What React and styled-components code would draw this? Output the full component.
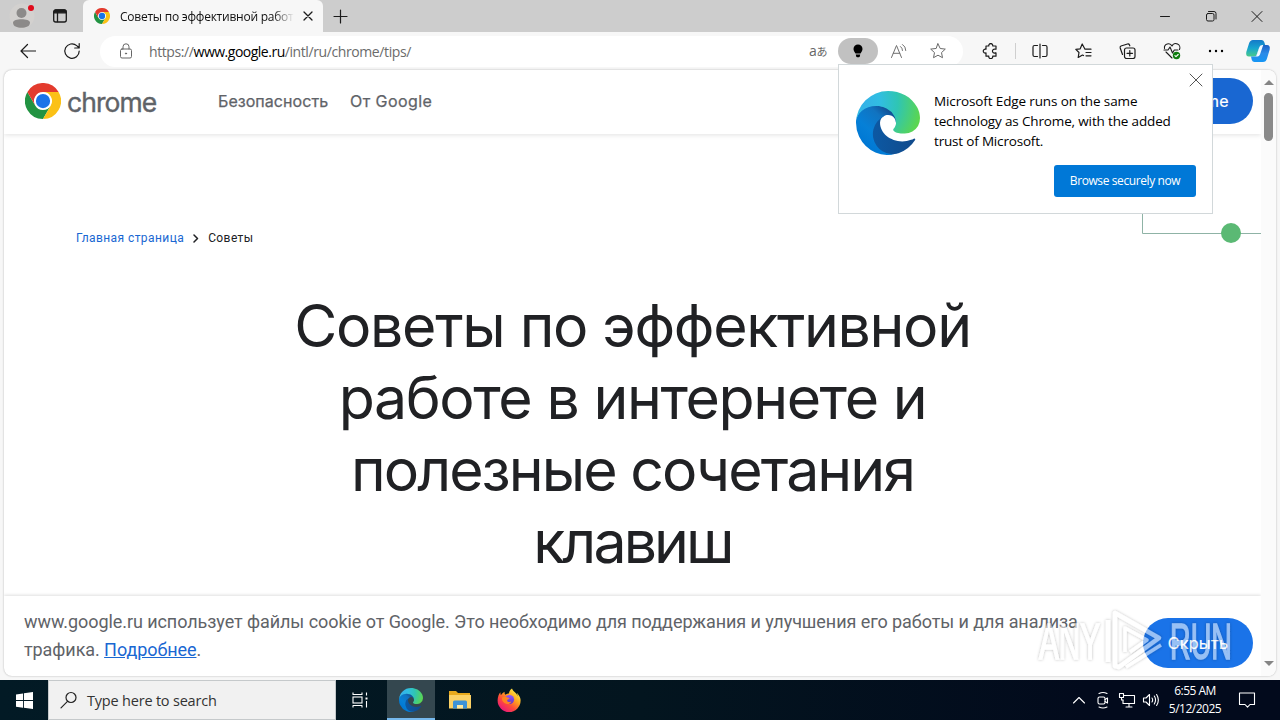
import styled, { createGlobalStyle } from 'styled-components';

const GlobalStyle = createGlobalStyle`
  * {
    box-sizing: border-box;
  }
  body {
    margin: 0;
    overflow: hidden;
    font-family: "Open Sans", "Noto Sans", sans-serif;
  }
  svg {
    display: block;
    flex: none;
  }
`;

/* ---------- icons ---------- */

const ChromeLogo = ({ size }) => (
  <svg width={size} height={size} viewBox="0 0 48 48">
    <circle cx="24" cy="24" r="13" fill="#fff" />
    <path d="M3.2 12A24 24 0 0 0 24 48L34.4 30A12 12 0 0 1 13.6 30Z" fill="#229342" />
    <path d="M24 12H44.8A24 24 0 0 1 24 48L34.4 30A12 12 0 0 0 24 12Z" fill="#fbc116" />
    <path d="M24 12H44.8A24 24 0 0 0 3.2 12L13.6 30A12 12 0 0 1 24 12Z" fill="#e33b2e" />
    <circle cx="24" cy="24" r="9.5" fill="#1a73e8" />
  </svg>
);

const EdgeLogo = ({ size, id }) => (
  <svg width={size} height={size} viewBox="0 0 256 256">
    <defs>
      <linearGradient id={`${id}a`} x1="63" y1="178" x2="241" y2="178" gradientUnits="userSpaceOnUse">
        <stop offset="0" stopColor="#0c59a4" />
        <stop offset="1" stopColor="#114a8b" />
      </linearGradient>
      <linearGradient id={`${id}b`} x1="157" y1="100" x2="46" y2="221" gradientUnits="userSpaceOnUse">
        <stop offset="0" stopColor="#114f95" />
        <stop offset=".25" stopColor="#1173c0" />
        <stop offset=".67" stopColor="#0680d7" />
        <stop offset="1" stopColor="#0078d4" />
      </linearGradient>
      <radialGradient id={`${id}c`} cx="26" cy="46" r="235" gradientUnits="userSpaceOnUse">
        <stop offset="0" stopColor="#35b1e8" />
        <stop offset=".3" stopColor="#31bee2" />
        <stop offset=".6" stopColor="#2fc5b4" />
        <stop offset="1" stopColor="#5bd64f" />
      </radialGradient>
    </defs>
    <path fill={`url(#${id}a)`} d="M231 190.5c-3.4 1.8-6.9 3.4-10.5 4.7a101.9 101.9 0 01-35.9 6.4c-47.3 0-88.5-32.5-88.5-74.3a31.5 31.5 0 0116.4-27.3c-42.8 1.8-53.8 46.4-53.8 72.5 0 74 68.1 81.4 82.8 81.4 7.9 0 19.8-2.3 27-4.6l1.3-.4a128.3 128.3 0 0066.6-52.8 4 4 0 00-5.4-5.6z" />
    <path fill={`url(#${id}b)`} d="M105.7 241.4A79.2 79.2 0 0183 220.1a80.7 80.7 0 0129.5-120c3.2-1.5 8.5-4.1 15.6-4a32.4 32.4 0 0125.7 13 31.9 31.9 0 016.3 18.7c0-.2 24.5-79.6-80-79.6-43.9 0-80 41.6-80 78.2a130.2 130.2 0 0012.1 56 128 128 0 00156.4 67 75.5 75.5 0 01-62.8-8z" />
    <path fill={`url(#${id}c)`} d="M152.3 148.9c-.9 1-3.4 2.5-3.4 5.6 0 2.6 1.7 5.2 4.8 7.3 14.3 10 41.4 8.6 41.5 8.6a59.6 59.6 0 0030.3-8.3 61.4 61.4 0 0030.4-52.9c.3-22.4-8-37.3-11.3-43.9C223.5 23.9 177.7 0 128 0A128 128 0 000 126.2c.5-36.5 36.8-66 80-66 3.5 0 23.5.3 42 10a72.6 72.6 0 0130.9 29.3c6.1 10.6 7.2 24.1 7.2 29.5 0 5.4-2.7 13.3-7.8 19.9z" />
  </svg>
);

const Line = ({ w = 16, h = 16, color = '#1b1b1b', sw = 1, children }) => (
  <svg width={w} height={h} viewBox={`0 0 ${w} ${h}`} fill="none" stroke={color} strokeWidth={sw} strokeLinecap="round" strokeLinejoin="round">
    {children}
  </svg>
);

const ProfileIcon = () => (
  <svg width="26" height="26" viewBox="0 0 26 26">
    <circle cx="13" cy="13" r="12.5" fill="#d3d1cf" />
    <circle cx="12.500" cy="10" r="5" fill="#8c8a89" />
    <path d="M4 19.500c0-4.500 17-4.500 17 0 0 4-4 5.200-8.500 5.200S4 23.500 4 19.500z" fill="#8c8a89" />
    <circle cx="22" cy="5" r="3" fill="#e00b1c" />
  </svg>
);

const WorkspaceIcon = () => (
  <Line sw={1.3}>
    <rect x="1.700" y="2" width="12.600" height="12" rx="2" />
    <path d="M2 4.500V4q0-2 2-2h8q2 0 2 2v.8H2z" fill="#1b1b1b" />
    <path d="M5.500 5v8.500" />
  </Line>
);

const BackIcon = () => (
  <Line sw={1.2}><path d="M15.500 8H1M7.500 1.500L1 8l6.500 6.500" /></Line>
);

const ReloadIcon = () => (
  <Line w={18} h={18} sw={1.2}><path d="M16.200 9a7.200 7.200 0 1 1-2.500-5.400L16 5.800M16.200 1.500V6h-4.500" /></Line>
);

const LockIcon = () => (
  <Line color="#666">
    <rect x="2.500" y="6" width="11" height="9" rx="1.500" />
    <path d="M5 6V3.800a3 3 0 0 1 6 0V6" />
    <circle cx="8" cy="10.500" r=".6" fill="#666" />
  </Line>
);

const BulbIcon = () => (
  <svg width="12" height="14" viewBox="0 0 12 14">
    <path d="M6 .5a4.500 4.500 0 0 1 4.500 4.600c0 2-1.300 3-2 4.400h-5c-.7-1.400-2-2.400-2-4.400A4.500 4.500 0 0 1 6 .5zM3.800 10.500h4.400l-.4 2q-.2.700-1 .7H5.200q-.8 0-1-.7z" fill="#000" />
  </svg>
);

const ReadAloudIcon = () => (
  <Line w={18} h={16} color="#707070">
    <path d="M1.500 14.500L6.500 2.500l5 12M3.300 10.300h6.500M10.500 3.500q2 1.300 2 4M12.500 1.500q3.300 2 3.300 6" />
  </Line>
);

const star = 'M8 .8l2.200 4.700 5.100.6-3.800 3.500 1 5.100L8 12.200l-4.500 2.500 1-5.100L.7 6.100l5.100-.6z';
const StarIcon = () => <Line color="#6a6a6a"><path d={star} /></Line>;

// knobs on the top, left and bottom, a notch on the right
const PuzzleIcon = () => (
  <Line w={17} sw={1.2}>
    <path d="M4 3H6.800a2 2 0 1 1 3.900 0h3.300v3.200h-.8a2 2 0 1 0 0 3.700h.8v3.300h-3.300a2 2 0 1 1-3.900 0H4v-3.300a2 2 0 1 1 0-3.700z" />
  </Line>
);

const SplitIcon = () => (
  <Line sw={1.2}>
    <path d="M5.500 2.500H2.500q-1.500 0-1.500 1.500v8q0 1.500 1.500 1.500h3M10.500 2.500h3q1.500 0 1.500 1.500v8q0 1.500-1.500 1.500h-3M8 1v14" />
  </Line>
);

const FavoritesIcon = () => (
  <Line w={17} sw={1.200}>
    <path d="M10 6.200h6M11 9.500h5M11 12.800h5M10 6.200L7.200 1 5.200 5.800.8 6.300l3.200 3.200L3.200 14.500l4.300-2.500 1 .5" />
  </Line>
);

const CollectionsIcon = () => (
  <Line w={17} sw={1.200}>
    <rect x="5.500" y="5" width="10.500" height="10.500" rx="2" />
    <path d="M10.800 7.500v5.500M8 10.300h5.500M3.500 11.500L1.200 5Q.8 3.500 2 3l6.500-2q1.500-.3 2 1l.3.800" />
  </Line>
);

const HealthIcon = () => (
  <Line w={18} h={18} sw={1.100}>
    <path d="M1.500 6.500a4 4 0 0 1 7.500-2.500 4 4 0 0 1 7.500 3.500M3 10l6 6M1 8h4l2-3 2.500 6 1.800-3H15" />
    <circle cx="13.500" cy="13.500" r="3.700" fill="#107c10" stroke="none" />
    <path d="M11.900 13.600l1.100 1.100 2.200-2.200" stroke="#fff" />
  </Line>
);

const MoreIcon = () => (
  <svg width="16" height="4" viewBox="0 0 16 4">
    <circle cx="2" cy="2" r="1.200" /><circle cx="8" cy="2" r="1.200" /><circle cx="14" cy="2" r="1.200" />
  </svg>
);

const CopilotIcon = () => (
  <svg width="26" height="24" viewBox="0 0 26 24">
    <defs>
      <linearGradient id="cpA" x1="0" y1="0" x2="0" y2="1">
        <stop offset="0" stopColor="#1479c9" /><stop offset=".5" stopColor="#16a5cf" /><stop offset="1" stopColor="#49c98a" />
      </linearGradient>
      <linearGradient id="cpB" x1="0" y1="0" x2="0" y2="1">
        <stop offset="0" stopColor="#1c5fc4" /><stop offset=".5" stopColor="#2b8be8" /><stop offset="1" stopColor="#1596f5" />
      </linearGradient>
    </defs>
    <path d="M8 1h8.500q2 0 2.700 2l1 3h-3q-2.200 0-3 2.500L12 15q-.8 2.500-3 2.500H4Q.5 17.500 1.300 13L4 4.500Q5 1 8 1z" fill="url(#cpA)" />
    <path d="M18 23H9.500q-2 0-2.700-2l-.8-3.500h3q2.200 0 3-2.500L14.200 8.500Q15 6 17.200 6H22q3.500 0 2.700 4.500L22 19.500Q21 23 18 23z" fill="url(#cpB)" />
    <path d="M11.500 16.500l2.700-8q.8-2.500 3-2.500h1L15 15.500q-.8 2-2.500 2H9q1.700 0 2.500-1z" fill="#f2faff" />
  </svg>
);

const WindowsIcon = () => (
  <svg width="17" height="17" viewBox="0 0 17 17" fill="#fff">
    <path d="M0 2.400l7-1v6.700H0zM7.900 1.300L17 0v8.100H7.900zM0 9h7v6.700l-7-1zM7.900 9H17v8l-9.100-1.300z" />
  </svg>
);

const SearchIcon = () => (
  <Line w={18} h={18} color="#222" sw={1.200}><circle cx="11" cy="6.500" r="5" /><path d="M7.500 10.300L1 16.800" /></Line>
);

const TaskViewIcon = () => (
  <Line w={18} h={18} color="#fff" sw={1.100}>
    <path d="M2 1.500v2h9v-2M2 16.500v-2h9v2M15.500 1.500v3M15.500 10v6.500" strokeLinecap="butt" />
    <rect x="2" y="6" width="9" height="6" strokeLinejoin="miter" />
    <path d="M14.500 7.500h2" strokeWidth="2" strokeLinecap="butt" />
  </Line>
);

const FolderIcon = () => (
  <svg width="24" height="20" viewBox="0 0 24 20">
    <path d="M1 1h7l2 2h12v15H1z" fill="#e8a91c" />
    <path d="M1 5h22v13.500H1z" fill="#fbd165" />
    <path d="M5 18.500V12q0-1.500 1.500-1.500h11q1.500 0 1.500 1.500v6.500h-4V15H9v3.500z" fill="#3e93d8" />
    <path d="M9 15h6v3.500H9z" fill="#ffe9a0" />
  </svg>
);

const FirefoxIcon = () => (
  <svg width="24" height="24" viewBox="0 0 24 24">
    <defs>
      <linearGradient id="ffA" x1="20" y1="2" x2="4" y2="22" gradientUnits="userSpaceOnUse">
        <stop offset="0" stopColor="#fff04a" /><stop offset=".35" stopColor="#ffa51e" />
        <stop offset=".65" stopColor="#ff4b3a" /><stop offset="1" stopColor="#e8157d" />
      </linearGradient>
      <linearGradient id="ffB" x1="0" y1="0" x2="0" y2="1">
        <stop offset="0" stopColor="#9059ff" /><stop offset="1" stopColor="#6133c4" />
      </linearGradient>
    </defs>
    <path d="M22.500 8.500c-.6-1.500-1.800-3-2.800-3.500.8 1.500 1 2.500 1.100 3.200C19 4 16 3.500 15 .5 12.500 2 12 4.500 12 5.500c-1.500 0-2.700.6-3.700 1.300C7.500 6 7.500 4.500 7.600 3.800 6 4.500 4.800 6 4 7c-.5-.6-.6-2.400-.5-2.800C2 5.500.6 9 .6 12.500a11.500 11.500 0 0 0 23 0c0-1.500-.3-2.800-1.100-4z" fill="url(#ffA)" />
    <circle cx="12.500" cy="11.500" r="4.600" fill="url(#ffB)" />
    <path d="M5 9.500c2-1.200 4.500-.8 5.500 0l2 .4c0 1.300-2.300 1.300-2.500 2.300.2 1.800 2.500 2.400 4.500 1.400-1 2.500-4.500 3.300-7 1.500S5 12 5 9.500z" fill="#ff8420" />
  </svg>
);

const TraySvg = ({ children }) => <Line w={18} h={18} color="#fff" sw={1.100}>{children}</Line>;

/* ---------- layout ---------- */

const Screen = styled.div`
  position: relative;
  display: flex;
  flex-direction: column;
  width: 1280px;
  height: 720px;
  background: #f7f7f7;
`;

const TabStrip = styled.div`
  display: flex;
  align-items: center;
  height: 32px;
  background: #cdcdcd;
`;

const TabTools = styled.div`
  display: flex;
  align-items: center;
  gap: 17px;
  width: 83px;
  padding-left: 9px;
`;

const Tab = styled.div`
  display: flex;
  align-items: center;
  width: 240px;
  height: 32px;
  padding: 0 10px 0 11px;
  background: #f7f7f7;
  border-radius: 6px 6px 0 0;
`;

const TabTitle = styled.div`
  flex: 1;
  margin: 0 9px 0 10px;
  overflow: hidden;
  white-space: nowrap;
  font-size: 12px;
  letter-spacing: -0.24px;
  color: #111;
  mask-image: linear-gradient(90deg, #000 88%, transparent);
`;

const NewTab = styled.div`
  flex: 1;
  padding-left: 10px;
`;

const WindowButtons = styled.div`
  display: flex;
  align-items: center;
  gap: 30px;
  padding-right: 15px;
`;

const Toolbar = styled.div`
  display: flex;
  align-items: center;
  height: 38px;
  padding: 0 9px 0 20px;
`;

const NavButtons = styled.div`
  display: flex;
  align-items: center;
  gap: 27px;
  width: 80px;
`;

const AddressBar = styled.div`
  display: flex;
  align-items: center;
  width: 863px;
  height: 31px;
  padding: 0 17px 0 18px;
  flex: none;
  background: #fff;
  border-radius: 16px;
`;

const Url = styled.div`
  flex: 1;
  margin-left: 15px;
  font-size: 14px;
  letter-spacing: -0.4px;
  color: #6b6b6b;

  b {
    font-weight: 400;
    letter-spacing: -0.5px;
    color: #000;
  }
`;

const Translate = styled.div`
  width: 20px;
  font-family: "Open Sans", "Noto Sans CJK JP", sans-serif;
  font-size: 14px;
  line-height: 16px;
  white-space: nowrap;
  letter-spacing: -0.2px;
  color: #666;

  small {
    font-size: 11px;
  }
`;

const BulbButton = styled.div`
  display: grid;
  place-items: center;
  width: 40px;
  height: 26px;
  margin: 0 12px 0 9px;
  background: #c1c1c1;
  border-radius: 13px;
`;

const StarWrap = styled.div`
  margin-left: 22px;
`;

const ToolIcons = styled.div`
  display: flex;
  flex: 1;
  align-items: center;
  gap: 27px;
  padding-left: 19px;
`;

const Divider = styled.div`
  width: 1px;
  height: 16px;
  margin: 0 -11px;
  flex: none;
  background: #cfcfcf;
`;

const CopilotWrap = styled.div`
  margin-left: -6px;
`;

const PageFrame = styled.div`
  display: flex;
  width: 1272px;
  height: 606px;
  margin: 0 4px 4px;
  overflow: hidden;
  background: #fff;
  border-radius: 8px;
  box-shadow: 0 0 2px rgba(0, 0, 0, 0.3);
`;

const Page = styled.div`
  display: flex;
  flex: 1;
  flex-direction: column;
  min-width: 0;
`;

const SiteHeader = styled.header`
  display: flex;
  align-items: center;
  height: 64px;
  padding: 0 8px 2px 21px;
  box-shadow: 0 1px 5px rgba(0, 0, 0, 0.12);
`;

const Wordmark = styled.div`
  width: 151px;
  margin: 1px 0 0 6px;
  font-family: Inter, sans-serif;
  font-size: 26.500px;
  line-height: 32px;
  letter-spacing: -0.95px;
  color: #5f6368;
  -webkit-text-stroke: 0.4px #5f6368;
`;

const SiteLink = styled.div`
  width: ${(p) => p.$width};
  font-family: Inter, sans-serif;
  font-size: 16px;
  letter-spacing: ${(p) => p.$spacing};
  white-space: nowrap;
  color: #5f6368;
  -webkit-text-stroke: 0.25px #5f6368;
`;

const Pill = styled.div`
  display: flex;
  align-items: center;
  justify-content: ${(p) => p.$align || 'center'};
  width: ${(p) => p.$width};
  height: ${(p) => p.$height};
  margin: ${(p) => p.$drop || 0} 0 0 auto;
  padding: 0 24px;
  flex: none;
  background: ${(p) => p.$bg};
  border-radius: 25px;
  font-family: Inter, sans-serif;
  font-size: 16px;
  letter-spacing: 0.3px;
  white-space: nowrap;
  color: #fff;
  -webkit-text-stroke: 0.2px #fff;
`;

const Article = styled.main`
  flex: 1;
`;

const Breadcrumb = styled.div`
  display: flex;
  align-items: center;
  gap: 9px;
  height: 20px;
  margin: 94px 0 0 72px;
  font-family: Roboto, sans-serif;
  font-size: 12px;
  letter-spacing: 0.42px;
  color: #202124;

  a {
    color: #1967d2;
  }
`;

const Title = styled.h1`
  width: 1257px;
  margin: 42px 0 0;
  font-family: Inter, sans-serif;
  font-size: 59px;
  font-weight: 400;
  line-height: 72px;
  text-align: center;
  color: #202124;
`;

const TitleLine = styled.span`
  display: block;
  white-space: nowrap;
  letter-spacing: ${(p) => p.$spacing};
`;

const CookieBar = styled.div`
  display: flex;
  align-items: center;
  height: 80px;
  padding: 0 8px 0 20px;
  box-shadow: 0 -1px 3px rgba(0, 0, 0, 0.13);
`;

const CookieText = styled.div`
  font-family: Roboto, sans-serif;
  font-size: 18px;
  line-height: 28px;
  letter-spacing: -0.07px;
  white-space: nowrap;
  color: #5f6368;

  a {
    color: #1967d2;
    text-decoration: underline;
  }
`;

const Scrollbar = styled.div`
  display: flex;
  flex-direction: column;
  align-items: center;
  width: 15px;
  padding: 10px 0 10px;
  background: #fbfbfb;
`;

const Thumb = styled.div`
  width: 9px;
  height: 48px;
  margin: 8px 0 auto;
  background: #8a8a8a;
  border-radius: 5px;
`;

const Popup = styled.div`
  position: absolute;
  left: 838px;
  top: 64px;
  display: flex;
  width: 375px;
  height: 150px;
  padding: 26px 16px 16px 17px;
  background: #fff;
  border: 1px solid #d2d8da;
`;

const PopupBody = styled.div`
  display: flex;
  flex: 1;
  flex-direction: column;
  margin-left: 14px;
  font-size: 13.500px;
  line-height: 20px;
  color: #000;
`;

const PopupLine = styled.span`
  display: block;
  white-space: nowrap;
  letter-spacing: ${(p) => p.$spacing};
`;

const PopupButton = styled.div`
  display: grid;
  place-items: center;
  align-self: flex-end;
  width: 142px;
  height: 32px;
  margin-top: 14px;
  background: #0078d7;
  border-radius: 3px;
  font-size: 12px;
  letter-spacing: -0.4px;
  color: #fff;
`;

const PopupClose = styled.div`
  position: absolute;
  right: 9px;
  top: 8px;
`;

const Overlay = styled.div`
  position: absolute;
  left: ${(p) => p.$x}px;
  top: ${(p) => p.$y}px;
`;

const Taskbar = styled.div`
  display: flex;
  align-items: center;
  height: 40px;
  background: linear-gradient(90deg, #021a25, #03151f 50%, #020a1c 85%);
`;

const TaskButton = styled.div`
  display: grid;
  place-items: center;
  width: ${(p) => p.$width || '49px'};
  height: 40px;
  padding-right: ${(p) => p.$nudge || 0};
  background: ${(p) => (p.$active ? '#34474f' : 'transparent')};
  box-shadow: ${(p) => (p.$active ? 'inset 0 -2px #76b9ed' : 'none')};
`;

const SearchBox = styled.div`
  display: flex;
  align-items: center;
  gap: 9px;
  width: 288px;
  height: 40px;
  padding-left: 11px;
  background: #f1f1f1;
  border: 1px solid #c5c9cb;
  font-size: 14.500px;
  letter-spacing: -0.2px;
  color: #333;
`;

const Tray = styled.div`
  display: flex;
  align-items: center;
  gap: 6px;
  margin-left: auto;
  padding-right: 24px;
`;

const Clock = styled.div`
  width: 58px;
  margin: 0 8px 0 0;
  font-size: 12px;
  line-height: 18px;
  letter-spacing: -0.5px;
  text-align: center;
  white-space: nowrap;
  color: #fff;
`;

const Watermark = () => (
  <svg width="208" height="68" viewBox="0 0 208 68">
    <defs>
      <filter id="wmShadow" x="-10%" y="-10%" width="120%" height="120%">
        <feDropShadow dx="0" dy="0" stdDeviation="1.800" floodColor="#000" floodOpacity=".5" />
      </filter>
    </defs>
    <g filter="url(#wmShadow)" opacity=".55" fill="#fff" stroke="#fff" fontFamily="Liberation Sans" fontSize="50">
      <text x="3" y="53" strokeWidth="1.500" textLength="61" lengthAdjust="spacingAndGlyphs">ANY</text>
      <text x="134" y="53" strokeWidth="1.500" textLength="62" lengthAdjust="spacingAndGlyphs">RUN</text>
      <g fill="none" strokeWidth="4.500" strokeLinejoin="round">
        <path d="M72 56V14M79 60V7l44 25-40 29z" />
        <path d="M89 46V22l22 12-17 12M90 61l35-22" strokeWidth="3.500" />
      </g>
    </g>
  </svg>
);

export default function App() {
  return (
    <Screen>
      <GlobalStyle />
      <TabStrip>
        <TabTools>
          <ProfileIcon />
          <WorkspaceIcon />
        </TabTools>
        <Tab>
          <ChromeLogo size={16} />
          <TabTitle>Советы по эффективной работ</TabTitle>
          <Line w={10} h={10} sw={1.300}><path d="M1 1l8 8M9 1L1 9" /></Line>
        </Tab>
        <NewTab>
          <Line w={15} h={15} sw={1.200}><path d="M7.500 1v13M1 7.500h13" /></Line>
        </NewTab>
        <WindowButtons>
          <Line><path d="M3.500 8.500h9" /></Line>
          <Line>
            <rect x="3.500" y="5.500" width="7.500" height="7.500" rx="1.500" />
            <path d="M5.500 3.500H11q2 0 2 2V11" />
          </Line>
          <Line><path d="M3 3.500l10 10M13 3.500l-10 10" /></Line>
        </WindowButtons>
      </TabStrip>

      <Toolbar>
        <NavButtons>
          <BackIcon />
          <ReloadIcon />
        </NavButtons>
        <AddressBar>
          <LockIcon />
          <Url>https://<b>www.google.ru</b>/intl/ru/chrome/tips/</Url>
          <Translate>a<small>あ</small></Translate>
          <BulbButton><BulbIcon /></BulbButton>
          <ReadAloudIcon />
          <StarWrap><StarIcon /></StarWrap>
        </AddressBar>
        <ToolIcons>
          <PuzzleIcon />
          <Divider />
          <SplitIcon />
          <FavoritesIcon />
          <CollectionsIcon />
          <HealthIcon />
          <MoreIcon />
          <CopilotWrap><CopilotIcon /></CopilotWrap>
        </ToolIcons>
      </Toolbar>

      <PageFrame>
        <Page>
          <SiteHeader>
            <ChromeLogo size={36} />
            <Wordmark>chrome</Wordmark>
            <SiteLink $width="132px" $spacing="0.05px">Безопасность</SiteLink>
            <SiteLink $spacing="0.45px">От Google</SiteLink>
            <Pill $width="190px" $height="46px" $bg="#1967d2" $align="flex-end">Chrome</Pill>
          </SiteHeader>
          <Article>
            <Breadcrumb>
              <a>Главная страница</a>
              <Line w={6} h={9} color="#202124" sw={1.500}><path d="M1 1l3.500 3.500L1 8" /></Line>
              <span>Советы</span>
            </Breadcrumb>
            <Title>
              <TitleLine $spacing="-1.32px">Советы по эффективной</TitleLine>
              <TitleLine $spacing="-1.42px">работе в интернете и</TitleLine>
              <TitleLine $spacing="-1.95px">полезные сочетания</TitleLine>
              <TitleLine $spacing="-2.9px">клавиш</TitleLine>
            </Title>
          </Article>
          <CookieBar>
            <CookieText>
              www.google.ru использует файлы cookie от Google. Это необходимо для поддержания и улучшения его работы и для анализа
              <br />
              трафика. <a>Подробнее</a>.
            </CookieText>
            <Pill $width="110px" $height="50px" $bg="#1a73e8" $drop="14px">Скрыть</Pill>
          </CookieBar>
        </Page>
        <Scrollbar>
          <svg width="10" height="5" viewBox="0 0 10 5"><path d="M0 5l5-5 5 5z" fill="#858585" /></svg>
          <Thumb />
          <svg width="10" height="5" viewBox="0 0 10 5"><path d="M0 0h10L5 5z" fill="#858585" /></svg>
        </Scrollbar>
      </PageFrame>

      <Taskbar>
        <TaskButton $width="48px"><WindowsIcon /></TaskButton>
        <SearchBox><SearchIcon />Type here to search</SearchBox>
        <TaskButton $width="51px" $nudge="4px"><TaskViewIcon /></TaskButton>
        <TaskButton $width="48px" $active><EdgeLogo size={24} id="task" /></TaskButton>
        <TaskButton><FolderIcon /></TaskButton>
        <TaskButton><FirefoxIcon /></TaskButton>
        <Tray>
          <TraySvg><path d="M3.500 12L9 6.500l5.500 5.500" /></TraySvg>
          <TraySvg>
            <rect x="4" y="6" width="7" height="7" rx="1.500" />
            <path d="M11 8.500l2.500-1.500v5L11 10.500M5 2.500q4-2 8 0M5 16q4 2 8 0" />
          </TraySvg>
          <TraySvg>
            <path d="M6 4.500h10.500v8H5V9M11 12.500V16M8 16h6" />
            <path d="M1.500 2.500h4v4h-4zM3.500 6.500V9H5" />
          </TraySvg>
          <TraySvg>
            <path d="M1.500 7H4l3.500-3.500v11L4 11H1.500zM10 7q1.300 2 0 4M12.300 5q2.500 4 0 8M14.600 3.500q3.500 5.500 0 11" />
          </TraySvg>
          <Clock>6:55 AM<br />5/12/2025</Clock>
          <TraySvg><path d="M1.500 2h15v11.500H12l-2.500 2.700L7 13.500H1.500z" /></TraySvg>
        </Tray>
      </Taskbar>

      <Overlay $x={1142} $y={213}>
        <svg width="119" height="32" viewBox="0 0 119 32">
          <path d="M.5 0v20.500H119" fill="none" stroke="#8fb3a6" />
          <circle cx="89" cy="20" r="10" fill="#5bb974" />
        </svg>
      </Overlay>

      <Popup>
        <EdgeLogo size={64} id="popup" />
        <PopupBody>
          <PopupLine $spacing="-0.13px">Microsoft Edge runs on the same</PopupLine>
          <PopupLine $spacing="-0.15px">technology as Chrome, with the added</PopupLine>
          <PopupLine $spacing="-0.18px">trust of Microsoft.</PopupLine>
          <PopupButton>Browse securely now</PopupButton>
        </PopupBody>
        <PopupClose>
          <Line w={14} h={14} color="#555"><path d="M1 1l12 12M13 1L1 13" /></Line>
        </PopupClose>
      </Popup>

      <Overlay $x={1036} $y={606}>
        <Watermark />
      </Overlay>
    </Screen>
  );
}
